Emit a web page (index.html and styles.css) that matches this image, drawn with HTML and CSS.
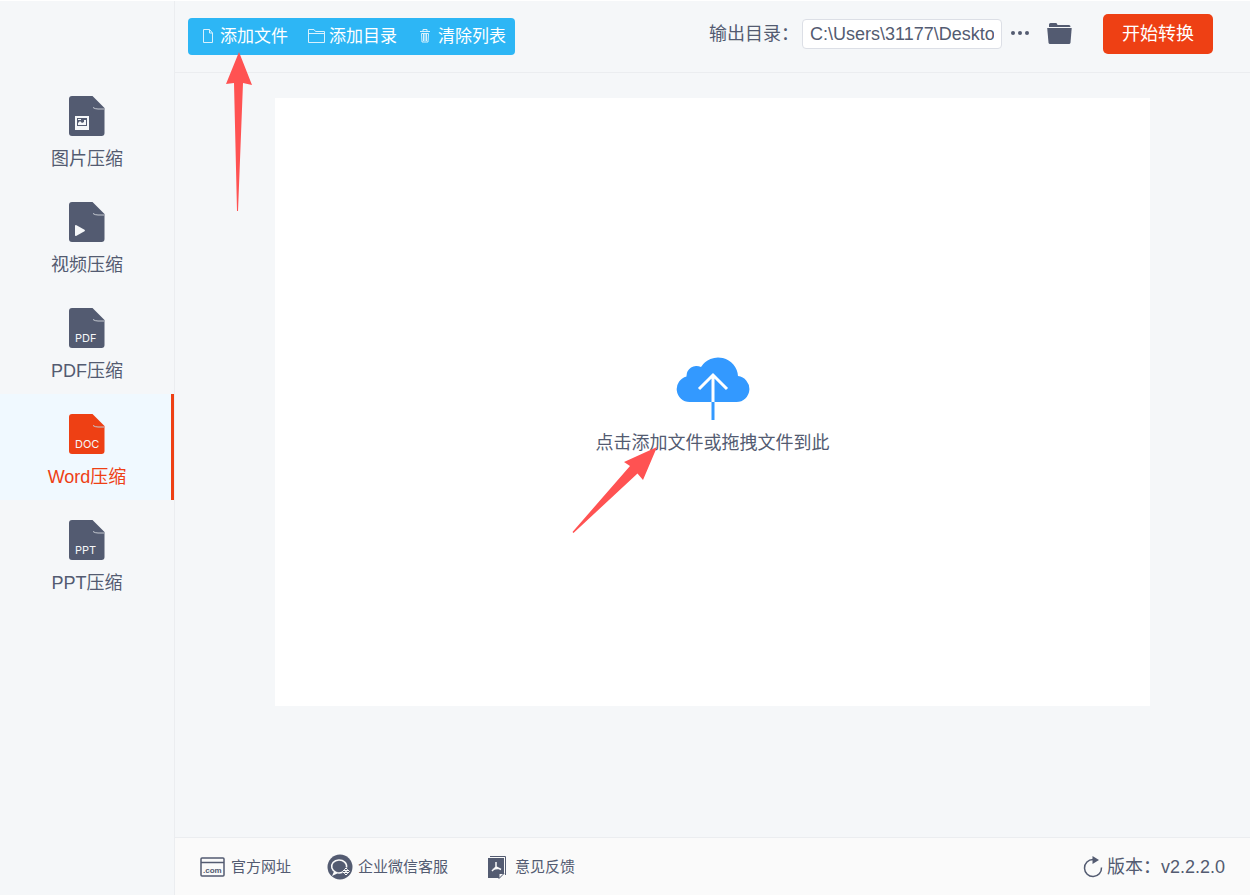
FILE: index.html
```html
<!DOCTYPE html>
<html lang="zh-CN">
<head>
    <meta charset="UTF-8">
    <meta name="viewport" content="width=device-width, initial-scale=1.0">
    <title>Word压缩</title>
    <link rel="stylesheet" href="styles.css">
</head>
<body>
    <nav class="sidebar">
        <a class="nav-item" href="#image">
            <svg class="file-icon" viewBox="0 0 36 40">
                <path d="M3 0H23.500L35.500 12V37a3 3 0 0 1-3 3H3a3 3 0 0 1-3-3V3a3 3 0 0 1 3-3z"/>
                <path class="fold" d="M24 11.500q2 1.500 5 1.500h6"/>
                <path class="mark" fill-rule="evenodd" d="M6 20h14v14H6zM8 22v8h10v-8z"/>
                <path class="mark" d="M9 23h3v1H9zM9 29v-2l2-2 2 2 2-1v-2h2v5z"/>
            </svg>
            <span>图片压缩</span>
        </a>
        <a class="nav-item" href="#video">
            <svg class="file-icon" viewBox="0 0 36 40">
                <path d="M3 0H23.500L35.500 12V37a3 3 0 0 1-3 3H3a3 3 0 0 1-3-3V3a3 3 0 0 1 3-3z"/>
                <path class="fold" d="M24 11.500q2 1.500 5 1.500h6"/>
                <path class="mark" d="M6 24q0-1.500 1.500-.8l8 4.500q1 .8 0 1.600l-8 4.500q-1.500.8-1.500-.8z"/>
            </svg>
            <span>视频压缩</span>
        </a>
        <a class="nav-item" href="#pdf">
            <svg class="file-icon" viewBox="0 0 36 40">
                <path d="M3 0H23.500L35.500 12V37a3 3 0 0 1-3 3H3a3 3 0 0 1-3-3V3a3 3 0 0 1 3-3z"/>
                <path class="fold" d="M24 11.500q2 1.500 5 1.500h6"/>
                <text x="6" y="34">PDF</text>
            </svg>
            <span>PDF压缩</span>
        </a>
        <a class="nav-item active" href="#word">
            <svg class="file-icon" viewBox="0 0 36 40">
                <path d="M3 0H23.500L35.500 12V37a3 3 0 0 1-3 3H3a3 3 0 0 1-3-3V3a3 3 0 0 1 3-3z"/>
                <path class="fold" d="M24 11.500q2 1.500 5 1.500h6"/>
                <text x="6" y="34">DOC</text>
            </svg>
            <span>Word压缩</span>
        </a>
        <a class="nav-item" href="#ppt">
            <svg class="file-icon" viewBox="0 0 36 40">
                <path d="M3 0H23.500L35.500 12V37a3 3 0 0 1-3 3H3a3 3 0 0 1-3-3V3a3 3 0 0 1 3-3z"/>
                <path class="fold" d="M24 11.500q2 1.500 5 1.500h6"/>
                <text x="6" y="34">PPT</text>
            </svg>
            <span>PPT压缩</span>
        </a>
    </nav>

    <div class="main">
        <header class="header">
            <div class="toolbar">
                <button class="tool">
                    <svg class="tool-icon" viewBox="0 0 18 18"><path d="M4.500 1.500h6l3 3.500v9.500h-9zM10.500 1.500V5h3"/></svg>
                    添加文件
                </button>
                <button class="tool">
                    <svg class="tool-icon" viewBox="0 0 18 18"><path d="M.5 14.500v-13h5.500l1.500 2h9v11zM.5 5.500h16"/></svg>
                    添加目录
                </button>
                <button class="tool">
                    <svg class="tool-icon" viewBox="0 0 18 18"><path d="M3 3.500h10M6 3.500v-2h4v2M4.500 5.500l.5 8.500h6l.5-8.500zM6.500 6v7M8 6v7M9.500 6v7"/></svg>
                    清除列表
                </button>
                <svg class="arrow-up" viewBox="0 0 28 160"><path d="M14 0L27 33 18 31 13 159h-1L9 31 1 32z"/></svg>
            </div>
            <div class="output">
                <label for="outputPath">输出目录：</label>
                <input id="outputPath" class="path" type="text" value="C:\Users\31177\Deskto">
                <button class="icon-button" aria-label="浏览">
                    <svg class="dots" viewBox="0 0 20 6"><circle cx="2" cy="2" r="2"/><circle cx="9" cy="2" r="2"/><circle cx="16" cy="2" r="2"/></svg>
                </button>
                <button class="icon-button open" aria-label="打开目录">
                    <svg class="folder" viewBox="0 0 26 22"><path d="M2 1.500Q2 0 3.500 0H9q1 0 1.500 2H22q1.500 0 1.500 2H2z"/><path d="M.2 5h24.500L23.500 19.500q-.2 1.500-1.500 1.500H3Q1.700 21 1.500 19.500z"/></svg>
                </button>
                <button class="start">开始转换</button>
            </div>
        </header>

        <main class="workspace">
            <button class="dropzone">
                <svg class="cloud" viewBox="0 0 74 64">
                    <path class="cloud-shape" d="M13.500 45A13 13 0 0 1 10.500 19.400 10 10 0 0 1 25 10 20 20 0 0 1 62 19.100 13 13 0 0 1 60.500 45z"/>
                    <path class="cloud-stem" d="M37 45v18"/>
                    <path class="cloud-arrow" d="M37 45V18M23 32l14-14 14 14"/>
                </svg>
                <span class="hint">点击添加文件或拖拽文件到此
                    <svg class="arrow-diag" viewBox="0 0 86 88"><path d="M85 1L71 34 65.500 27.500 1.500 87 .5 86 58 20 52 16z"/></svg>
                </span>
            </button>
        </main>

        <footer class="footer">
            <a class="foot-link" href="#site">
                <svg class="foot-icon" viewBox="0 0 26 26"><rect class="line" x="1" y="4" width="23" height="18" rx="1"/><path class="line" d="M1 8.500h23"/><text x="3" y="19">.com</text></svg>
                官方网址
            </a>
            <a class="foot-link" href="#service">
                <svg class="foot-icon" viewBox="0 0 26 26">
                    <circle cx="13" cy="13" r="12.500"/>
                    <path class="bubble" d="M19.500 13.500a7.500 6.500 0 1 0-4 4.700M8 17l-1.500 3.500 4-2"/>
                    <path class="bubble thin" d="M19 14l1.500 1.500L19 17l-1.500-1.500zM21 16l1.500 1.500L21 19l-1.500-1.500zM17 16l1.500 1.500L17 19l-1.500-1.500zM19 18l1.500 1.500L19 21l-1.500-1.500z"/>
                </svg>
                企业微信客服
            </a>
            <a class="foot-link" href="#feedback">
                <svg class="foot-icon" viewBox="0 0 26 26">
                    <path class="line thin" d="M6 2.500h15.500V21"/>
                    <path d="M4 4h16v15l-4.500 5H4z"/>
                    <path class="paper" d="M15 19.500h5l-5 5z"/>
                    <path class="bubble" d="M12 8v5M12 13l-4 4M12 13l5 2.500M9 15.500q3-1.500 6-1"/>
                </svg>
                意见反馈
            </a>
            <div class="version">
                <svg class="refresh" viewBox="0 0 20 22"><path class="line" d="M10 3.500a8.500 8.500 0 1 0 8.500 8"/><path d="M9.500 0l6.500 4-6.500 4z"/></svg>
                版本：v2.2.2.0
            </div>
        </footer>
    </div>
</body>
</html>
```
FILE: styles.css
```css
* {
    box-sizing: border-box;
}

body {
    display: flex;
    min-height: 100vh;
    margin: 0;
    border-top: 1px solid #ffffff;
    background-color: #f5f7f9;
    color: #535b71;
    font-family: "Liberation Sans", "Noto Sans CJK SC", sans-serif;
    font-size: 18px;
    line-height: 24px;
}

a {
    color: inherit;
    text-decoration: none;
}

button {
    border: none;
    padding: 0;
    background: none;
    color: inherit;
    font: inherit;
    cursor: pointer;
}

svg {
    display: block;
    flex: none;
    fill: #535b71;
}

/* sidebar */
.sidebar {
    flex: none;
    width: 175px;
    padding-top: 75px;
    border-right: 1px solid #ebedf0;
}

.nav-item {
    display: flex;
    flex-direction: column;
    align-items: center;
    gap: 11px;
    height: 106px;
    padding-top: 20px;
}

.nav-item.active {
    background: linear-gradient(#ee4014, #ee4014) right / 3px 100% no-repeat #f0f9ff;
    color: #ee4014;
}

.file-icon {
    width: 36px;
    height: 40px;
}

.active .file-icon {
    fill: #ee4014;
}

.file-icon .mark {
    fill: #f5f7f9;
}

.file-icon .fold {
    fill: none;
    stroke: #c4c8d0;
}

.file-icon text {
    fill: #f5f7f9;
    font-family: Inter, sans-serif;
    font-size: 11px;
}

/* header */
.main {
    display: flex;
    flex: 1;
    flex-direction: column;
}

.header {
    display: flex;
    align-items: center;
    justify-content: space-between;
    height: 72px;
    padding: 0 37px 0 13px;
    border-bottom: 1px solid #ebedf0;
}

.toolbar {
    position: relative;
    display: flex;
    border-radius: 4px;
    background-color: #2db6f5;
}

.tool {
    display: flex;
    align-items: center;
    gap: 3px;
    width: 109px;
    height: 37px;
    padding-left: 11px;
    color: white;
    font-size: 17px;
    white-space: nowrap;
}

.tool-icon {
    width: 18px;
    height: 18px;
    fill: none;
    stroke: #d8f1fd;
}

.arrow-up {
    position: absolute;
    top: 34px;
    left: 37px;
    width: 28px;
    height: 160px;
    fill: #ff5252;
    pointer-events: none;
}

.output {
    display: flex;
    align-items: center;
    padding-bottom: 5px;
}

.path {
    width: 200px;
    height: 30px;
    margin: 0 9px 0 3px;
    padding: 0 7px;
    border: 1px solid #dcdfe6;
    border-radius: 4px;
    background-color: white;
    color: inherit;
    font: inherit;
}

.dots {
    width: 20px;
    height: 6px;
}

.open {
    margin: 0 30px 0 16px;
}

.folder {
    width: 26px;
    height: 22px;
}

.start {
    width: 110px;
    height: 40px;
    border-radius: 5px;
    background-color: #ee4014;
    color: white;
}

/* drop area */
.workspace {
    display: flex;
    flex: 1;
    padding: 25px 100px 131px;
}

.dropzone {
    display: flex;
    flex: 1;
    flex-direction: column;
    align-items: center;
    justify-content: center;
    gap: 10px;
    padding-top: 8px;
    background-color: white;
}

.cloud {
    width: 74px;
    height: 64px;
}

.cloud-shape {
    fill: #3399ff;
}

.cloud-stem {
    stroke: #3399ff;
    stroke-width: 3;
}

.cloud-arrow {
    fill: none;
    stroke: white;
    stroke-width: 3;
}

.hint {
    position: relative;
}

.arrow-diag {
    position: absolute;
    top: 15px;
    right: 172px;
    width: 86px;
    height: 88px;
    fill: #ff5252;
}

/* footer */
.footer {
    display: flex;
    align-items: center;
    gap: 36px;
    height: 58px;
    padding: 0 25px;
    border-top: 1px solid #ebedf0;
    background-color: #fafafa;
}

.foot-link {
    display: flex;
    align-items: center;
    gap: 5px;
    font-size: 15px;
}

.foot-icon {
    width: 26px;
    height: 26px;
}

.foot-icon text {
    font-family: "Liberation Sans", sans-serif;
    font-size: 8px;
    font-weight: bold;
}

.line {
    fill: none;
    stroke: #535b71;
    stroke-width: 1.5;
}

.bubble {
    fill: none;
    stroke: #fafafa;
    stroke-width: 1.5;
}

.thin {
    stroke-width: 1;
}

.paper {
    fill: #fafafa;
    stroke: #535b71;
}

.version {
    display: flex;
    align-items: center;
    gap: 4px;
    margin-left: auto;
}

.refresh {
    width: 20px;
    height: 22px;
}
```
